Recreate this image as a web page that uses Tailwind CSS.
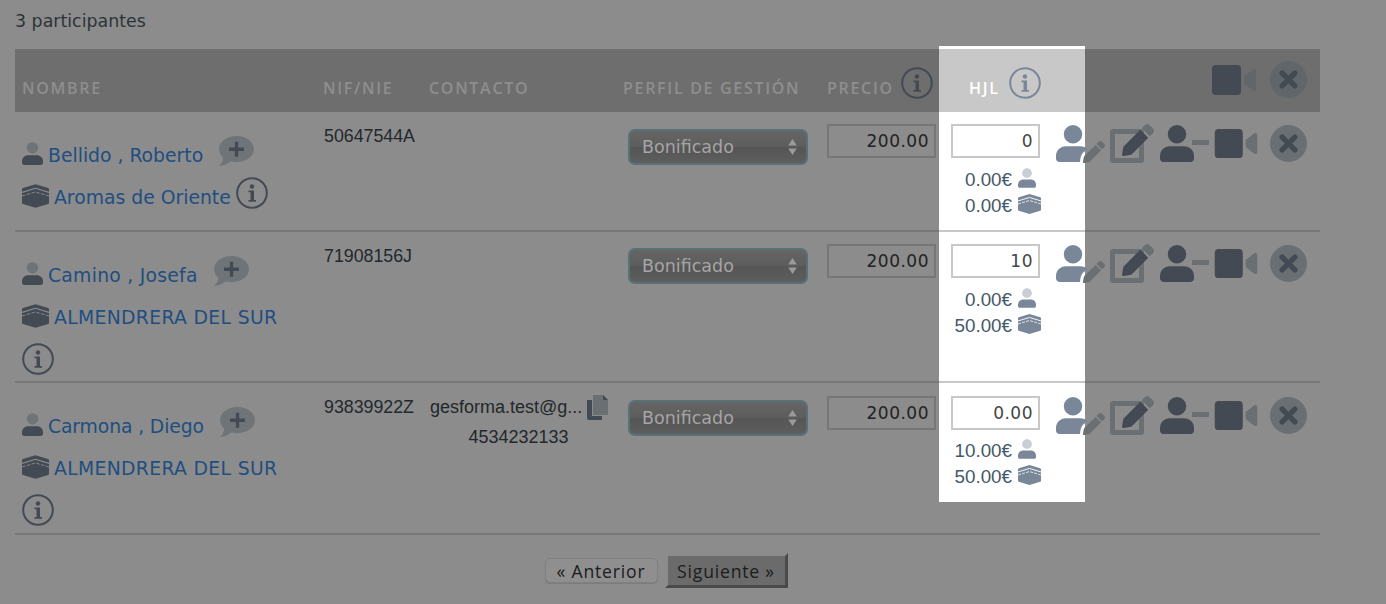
<!DOCTYPE html>
<html>

<head>
    <title>Participantes</title>
    <script src="https://cdn.jsdelivr.net/npm/@tailwindcss/browser@4"></script>
</head>

<body class="bg-[#8c8c8c] h-[604px] overflow-hidden font-['DejaVu_Sans',sans-serif]">
    <!-- shared duotone icons -->
    <svg class="hidden">
        <symbol id="user" viewBox="0 0 24 26">
            <circle cx="12" cy="6.5" r="6.5" fill="var(--soft)"></circle>
            <path fill="currentColor" d="M2.5 26C1 26 0 25 0 23.5V22c0-4 3-7 7-7h10c4 0 7 3 7 7v1.5c0 1.5-1 2.5-2.5 2.5z"></path>
        </symbol>
        <symbol id="user-cut" viewBox="0 0 24 26">
            <circle cx="12" cy="6.5" r="6.5" fill="currentColor"></circle>
            <path fill="currentColor" d="M2.5 26C1 26 0 25 0 23.5V22c0-4 3-7 7-7h10c2 0 4 .6 5.5 1.8L19 19.500c-1.300 1.500-2 4-2 6.500z"></path>
        </symbol>
        <symbol id="kaaba" viewBox="0 0 30 26">
            <path fill="currentColor" d="M15 0l14 4.200c.7.200 1 .7 1 1.300v15c0 .6-.3 1.100-1 1.300L15 26 1 21.800c-.7-.2-1-.7-1-1.300v-15c0-.6.3-1.100 1-1.300z"></path>
            <path fill="none" stroke="var(--line)" stroke-width="1.200" d="M0 9l15-4.500L30 9"></path>
            <path fill="none" stroke="var(--line)" stroke-width="1" stroke-dasharray="4 1.500" d="M0 13l15-4.500L30 13"></path>
        </symbol>
        <symbol id="info" viewBox="0 0 32 32">
            <circle cx="16" cy="16" r="14.800" fill="none" stroke="currentColor" stroke-width="2"></circle>
            <circle cx="16" cy="9.500" r="2.200" fill="currentColor"></circle>
            <path fill="currentColor" d="M12.500 13.500h5.500v9.500h2v1.700h-7.500V23h2v-7.800h-2z"></path>
        </symbol>
        <symbol id="comment" viewBox="0 0 36 31">
            <path fill="var(--soft)" d="M18 0c10 0 18 5.800 18 13.500S28 27 18 27c-2.200 0-4.300-.3-6.200-.8C9 28.800 5 31 0 31c2.500-2 4-5 4.300-8.500C1.600 20 0 17 0 13.500 0 5.800 8 0 18 0z"></path>
            <path fill="currentColor" d="M16.300 6h3.400v6h6v3.400h-6v6h-3.400v-6h-6V12h6z"></path>
        </symbol>
        <symbol id="pencil" viewBox="0 0 512 512">
            <path fill="var(--soft)" d="M497.900 142.100l-46.100 46.100c-4.700 4.700-12.300 4.700-17 0l-111-111c-4.700-4.700-4.700-12.300 0-17l46.100-46.100c18.700-18.700 49.100-18.700 67.900 0l60.100 60.100c18.800 18.700 18.800 49.100 0 67.900z"></path>
            <path fill="currentColor" d="M284.200 99.800L21.600 362.400.4 483.900c-2.900 16.400 11.400 30.600 27.800 27.800l121.500-21.300 262.600-262.600c4.700-4.700 4.700-12.300 0-17l-111-111c-4.800-4.700-12.400-4.700-17.100 0z"></path>
        </symbol>
        <symbol id="video" viewBox="0 0 44 30">
            <rect width="29" height="30" rx="4" fill="currentColor"></rect>
            <path fill="var(--soft)" d="M32 11.500L41 4.500c1.300-1 3-.2 3 1.500v18c0 1.700-1.700 2.500-3 1.500l-9-7z"></path>
        </symbol>
        <symbol id="close" viewBox="0 0 38 38">
            <circle cx="19" cy="19" r="19" fill="var(--soft)"></circle>
            <path fill="none" stroke="currentColor" stroke-width="5.500" stroke-linecap="round" d="M12.500 12.500l13 13M25.500 12.500l-13 13"></path>
        </symbol>
    </svg>

    <p class="pl-[15px] pt-[11px] h-[49px] text-[17.4px] leading-[20px] text-[#2d3439]">3 participantes</p>

    <div class="w-[1305px] ml-[15px]">
        <!-- header -->
        <div class="grid grid-cols-[301px_106px_194px_204px_119px_146px_235px] h-[63px] bg-[#6e6e6e] font-['Open_Sans',sans-serif] text-[16px] leading-[20px] font-semibold tracking-[1.7px] text-[#8e8e8e]">
            <div class="pl-[7px] pt-[29px]">NOMBRE</div>
            <div class="pl-[7px] pt-[29px]">NIF/NIE</div>
            <div class="pl-[7px] pt-[29px]">CONTACTO</div>
            <div class="pl-[7px] pt-[29px]">PERFIL DE GESTIÓN</div>
            <div class="pl-[7px] pt-[29px] flex items-start gap-[7px]">
                PRECIO
                <svg class="w-[32px] h-[32px] -mt-[11px] text-[#434a54]"><use href="#info"></use></svg>
            </div>
            <div class="-mt-[3px] h-[66px] bg-[#c8c8c8] border-t-[3px] border-white pl-[30px] pt-[29px] flex items-start gap-[9px] text-white">
                HJL
                <svg class="w-[32px] h-[32px] -mt-[11px] text-[#7a8799]"><use href="#info"></use></svg>
            </div>
            <div class="flex items-start justify-end gap-[14px] pt-[12px] pr-[13px] [--soft:#61666a]">
                <svg class="w-[44px] h-[30px] mt-[4px] text-[#434a54]"><use href="#video"></use></svg>
                <svg class="w-[37px] h-[37px] text-[#434a54]"><use href="#close"></use></svg>
            </div>
        </div>

        <!-- row 1 -->
        <div class="grid grid-cols-[301px_106px_194px_204px_119px_146px_235px] h-[120px] border-b-2 border-[#787878]">
            <div class="pl-[7px] pt-[24px] text-[18.8px] text-[#1f4e80]">
                <div class="flex items-start h-[42px]">
                    <svg class="w-[21px] h-[23px] mt-[6px] mr-[5px] text-[#434a54] [--soft:#6f7478]"><use href="#user"></use></svg>
                    <a href="#" class="leading-[30px] mt-[5px]">Bellido , Roberto</a>
                    <svg class="w-[35px] h-[30px] ml-[16px] text-[#434a54] [--soft:#6f7478]"><use href="#comment"></use></svg>
                </div>
                <div class="flex items-start">
                    <svg class="w-[27px] h-[24px] mt-[6px] mr-[5px] text-[#434a54] [--line:#8c8c8c]"><use href="#kaaba"></use></svg>
                    <a href="#" class="leading-[30px] mt-[5px]">Aromas de Oriente</a>
                    <svg class="w-[32px] h-[32px] ml-[5px] -mt-[1px] text-[#434a54]"><use href="#info"></use></svg>
                </div>
            </div>
            <div class="pl-[8px] pt-[11px] font-['Liberation_Sans',sans-serif] text-[17.8px] leading-[27px] text-[#23282c]">50647544A</div>
            <div></div>
            <div class="pl-[12px] pt-[17px]">
                <div class="relative w-[180px] h-[36px] rounded-[7px] border-2 border-[#587078] bg-[linear-gradient(#656565,#5d5d5d_48%,#555555_52%,#5e5e5e)] pl-[12px] text-[17.5px] leading-[32px] text-[#a5a5a5]">
                    Bonificado
                    <svg class="absolute right-[9px] top-[8px] w-[9px] h-[16px]" viewBox="0 0 9 17"><path fill="#9a9a9a" d="M4.500 0L9 7H0zM0 10h9l-4.500 7z"></path></svg>
                </div>
            </div>
            <div class="pl-[7px] pt-[12px]">
                <input value="200.00" class="w-[109px] h-[34px] border-2 border-[#777777] pr-[5px] text-right text-[17px] tracking-[0.5px] text-[#222222]">
            </div>
            <div class="-mb-[2px] border-b-2 border-[#c8c8c8] bg-white pl-[12px] pt-[12px]">
                <input value="0" class="w-[89px] h-[34px] border-2 border-[#c8c8c8] pr-[5px] text-right text-[17px] tracking-[0.5px] text-[#444444]">
                <div class="mt-[10px] font-['Liberation_Sans',sans-serif] text-[18.8px] text-[#44596a]">
                    <div class="flex items-center h-[25px]"><span class="w-[61px] text-right">0.00€</span><svg class="w-[18px] h-[20px] -mt-[6px] ml-[6px] text-[#7a8799] [--soft:#c9ced6]"><use href="#user"></use></svg></div>
                    <div class="flex items-center h-[27px]"><span class="w-[61px] text-right">0.00€</span><svg class="w-[23px] h-[20px] -mt-[6px] ml-[6px] text-[#7a8799] [--line:#ffffff]"><use href="#kaaba"></use></svg></div>
                </div>
            </div>
            <div class="-ml-[29px] pt-[12px] flex items-start">
                <div class="relative w-[49px] h-[39px] text-[#7a8799]">
                    <svg class="w-[34px] h-[39px]"><use href="#user-cut"></use></svg>
                    <svg class="absolute left-[27px] top-[17px] w-[22px] h-[22px] text-[#6a6f73] [--soft:#6a6f73]"><use href="#pencil"></use></svg>
                </div>
                <div class="relative w-[44px] h-[39px] ml-[5px] text-[#434a54] [--soft:#6a6f73]">
                    <div class="absolute left-0 top-[5px] w-[34px] h-[34px] rounded-[3px] border-[5px] border-[#6a6f73]"></div>
                    <svg class="absolute left-[12px] top-0 w-[32px] h-[32px]"><use href="#pencil"></use></svg>
                </div>
                <div class="relative w-[49px] h-[39px] ml-[6px] text-[#434a54] [--soft:#434a54]">
                    <svg class="w-[34px] h-[39px]"><use href="#user"></use></svg>
                    <div class="absolute left-[32px] top-[16px] w-[17px] h-[5px] bg-[#6a6f73]"></div>
                </div>
                <svg class="w-[44px] h-[29px] ml-[5px] mt-[5px] text-[#434a54] [--soft:#6a6f73]"><use href="#video"></use></svg>
                <svg class="w-[37px] h-[37px] ml-[12px] mt-[1px] text-[#434a54] [--soft:#6a6f73]"><use href="#close"></use></svg>
            </div>
        </div>

        <!-- row 2 -->
        <div class="grid grid-cols-[301px_106px_194px_204px_119px_146px_235px] h-[151px] border-b-2 border-[#787878]">
            <div class="pl-[7px] pt-[24px] text-[18.8px] text-[#1f4e80]">
                <div class="flex items-start h-[42px]">
                    <svg class="w-[21px] h-[23px] mt-[6px] mr-[5px] text-[#434a54] [--soft:#6f7478]"><use href="#user"></use></svg>
                    <a href="#" class="leading-[30px] mt-[5px] tracking-[0.25px]">Camino , Josefa</a>
                    <svg class="w-[35px] h-[30px] ml-[16px] text-[#434a54] [--soft:#6f7478]"><use href="#comment"></use></svg>
                </div>
                <div class="flex items-start">
                    <svg class="w-[27px] h-[24px] mt-[6px] mr-[5px] text-[#434a54] [--line:#8c8c8c]"><use href="#kaaba"></use></svg>
                    <a href="#" class="leading-[30px] mt-[5px] tracking-[0.33px]">ALMENDRERA DEL SUR</a>
                </div>
                <svg class="w-[32px] h-[32px] mt-[10px] text-[#434a54]"><use href="#info"></use></svg>
            </div>
            <div class="pl-[8px] pt-[11px] font-['Liberation_Sans',sans-serif] text-[17.8px] leading-[27px] text-[#23282c]">71908156J</div>
            <div></div>
            <div class="pl-[12px] pt-[16px]">
                <div class="relative w-[180px] h-[36px] rounded-[7px] border-2 border-[#587078] bg-[linear-gradient(#656565,#5d5d5d_48%,#555555_52%,#5e5e5e)] pl-[12px] text-[17.5px] leading-[32px] text-[#a5a5a5]">
                    Bonificado
                    <svg class="absolute right-[9px] top-[8px] w-[9px] h-[16px]" viewBox="0 0 9 17"><path fill="#9a9a9a" d="M4.500 0L9 7H0zM0 10h9l-4.500 7z"></path></svg>
                </div>
            </div>
            <div class="pl-[7px] pt-[12px]">
                <input value="200.00" class="w-[109px] h-[34px] border-2 border-[#777777] pr-[5px] text-right text-[17px] tracking-[0.5px] text-[#222222]">
            </div>
            <div class="-mb-[2px] border-b-2 border-[#c8c8c8] bg-white pl-[12px] pt-[12px]">
                <input value="10" class="w-[89px] h-[34px] border-2 border-[#c8c8c8] pr-[5px] text-right text-[17px] tracking-[0.5px] text-[#444444]">
                <div class="mt-[10px] font-['Liberation_Sans',sans-serif] text-[18.8px] text-[#44596a]">
                    <div class="flex items-center h-[25px]"><span class="w-[61px] text-right">0.00€</span><svg class="w-[18px] h-[20px] -mt-[6px] ml-[6px] text-[#7a8799] [--soft:#c9ced6]"><use href="#user"></use></svg></div>
                    <div class="flex items-center h-[27px]"><span class="w-[61px] text-right">50.00€</span><svg class="w-[23px] h-[20px] -mt-[6px] ml-[6px] text-[#7a8799] [--line:#ffffff]"><use href="#kaaba"></use></svg></div>
                </div>
            </div>
            <div class="-ml-[29px] pt-[12px] flex items-start">
                <div class="relative w-[49px] h-[39px] text-[#7a8799]">
                    <svg class="w-[34px] h-[39px]"><use href="#user-cut"></use></svg>
                    <svg class="absolute left-[27px] top-[17px] w-[22px] h-[22px] text-[#6a6f73] [--soft:#6a6f73]"><use href="#pencil"></use></svg>
                </div>
                <div class="relative w-[44px] h-[39px] ml-[5px] text-[#434a54] [--soft:#6a6f73]">
                    <div class="absolute left-0 top-[5px] w-[34px] h-[34px] rounded-[3px] border-[5px] border-[#6a6f73]"></div>
                    <svg class="absolute left-[12px] top-0 w-[32px] h-[32px]"><use href="#pencil"></use></svg>
                </div>
                <div class="relative w-[49px] h-[39px] ml-[6px] text-[#434a54] [--soft:#434a54]">
                    <svg class="w-[34px] h-[39px]"><use href="#user"></use></svg>
                    <div class="absolute left-[32px] top-[16px] w-[17px] h-[5px] bg-[#6a6f73]"></div>
                </div>
                <svg class="w-[44px] h-[29px] ml-[5px] mt-[5px] text-[#434a54] [--soft:#6a6f73]"><use href="#video"></use></svg>
                <svg class="w-[37px] h-[37px] ml-[12px] mt-[1px] text-[#434a54] [--soft:#6a6f73]"><use href="#close"></use></svg>
            </div>
        </div>

        <!-- row 3 -->
        <div class="grid grid-cols-[301px_106px_194px_204px_119px_146px_235px] h-[152px] border-b-2 border-[#787878]">
            <div class="pl-[7px] pt-[24px] text-[18.8px] text-[#1f4e80]">
                <div class="flex items-start h-[42px]">
                    <svg class="w-[21px] h-[23px] mt-[6px] mr-[5px] text-[#434a54] [--soft:#6f7478]"><use href="#user"></use></svg>
                    <a href="#" class="leading-[30px] mt-[5px] tracking-[-0.13px]">Carmona , Diego</a>
                    <svg class="w-[35px] h-[30px] ml-[16px] text-[#434a54] [--soft:#6f7478]"><use href="#comment"></use></svg>
                </div>
                <div class="flex items-start">
                    <svg class="w-[27px] h-[24px] mt-[6px] mr-[5px] text-[#434a54] [--line:#8c8c8c]"><use href="#kaaba"></use></svg>
                    <a href="#" class="leading-[30px] mt-[5px] tracking-[0.33px]">ALMENDRERA DEL SUR</a>
                </div>
                <svg class="w-[32px] h-[32px] mt-[10px] text-[#434a54]"><use href="#info"></use></svg>
            </div>
            <div class="pl-[8px] pt-[11px] font-['Liberation_Sans',sans-serif] text-[17.8px] leading-[27px] text-[#23282c]">93839922Z</div>
            <div class="pl-[8px] pt-[11px] font-['Liberation_Sans',sans-serif] text-[18px] leading-[27px] text-[#23282c]">
                <div class="flex items-start gap-[5px] h-[30px] whitespace-nowrap">
                    gesforma.test@g...
                    <svg class="w-[22px] h-[25px] mt-[1px]" viewBox="0 0 22 25"><path fill="#434a54" d="M0 5h5v16h10v4H2c-1 0-2-1-2-2z"></path><path fill="#6a6f73" d="M6 0h10l5 5v15H6z"></path><path fill="#434a54" d="M16 0l5 5h-5z"></path></svg>
                </div>
                <div class="w-[177px] text-center">4534232133</div>
            </div>
            <div class="pl-[12px] pt-[17px]">
                <div class="relative w-[180px] h-[36px] rounded-[7px] border-2 border-[#587078] bg-[linear-gradient(#656565,#5d5d5d_48%,#555555_52%,#5e5e5e)] pl-[12px] text-[17.5px] leading-[32px] text-[#a5a5a5]">
                    Bonificado
                    <svg class="absolute right-[9px] top-[8px] w-[9px] h-[16px]" viewBox="0 0 9 17"><path fill="#9a9a9a" d="M4.500 0L9 7H0zM0 10h9l-4.500 7z"></path></svg>
                </div>
            </div>
            <div class="pl-[7px] pt-[13px]">
                <input value="200.00" class="w-[109px] h-[34px] border-2 border-[#777777] pr-[5px] text-right text-[17px] tracking-[0.5px] text-[#222222]">
            </div>
            <div class="self-start h-[119px] bg-white pl-[12px] pt-[13px]">
                <input value="0.00" class="w-[89px] h-[34px] border-2 border-[#c8c8c8] pr-[5px] text-right text-[17px] tracking-[0.5px] text-[#444444]">
                <div class="mt-[9px] font-['Liberation_Sans',sans-serif] text-[18.8px] text-[#44596a]">
                    <div class="flex items-center h-[25px]"><span class="w-[61px] text-right">10.00€</span><svg class="w-[18px] h-[20px] -mt-[6px] ml-[6px] text-[#7a8799] [--soft:#c9ced6]"><use href="#user"></use></svg></div>
                    <div class="flex items-center h-[27px]"><span class="w-[61px] text-right">50.00€</span><svg class="w-[23px] h-[20px] -mt-[6px] ml-[6px] text-[#7a8799] [--line:#ffffff]"><use href="#kaaba"></use></svg></div>
                </div>
            </div>
            <div class="-ml-[29px] pt-[13px] flex items-start">
                <div class="relative w-[49px] h-[39px] text-[#7a8799]">
                    <svg class="w-[34px] h-[39px]"><use href="#user-cut"></use></svg>
                    <svg class="absolute left-[27px] top-[17px] w-[22px] h-[22px] text-[#6a6f73] [--soft:#6a6f73]"><use href="#pencil"></use></svg>
                </div>
                <div class="relative w-[44px] h-[39px] ml-[5px] text-[#434a54] [--soft:#6a6f73]">
                    <div class="absolute left-0 top-[5px] w-[34px] h-[34px] rounded-[3px] border-[5px] border-[#6a6f73]"></div>
                    <svg class="absolute left-[12px] top-0 w-[32px] h-[32px]"><use href="#pencil"></use></svg>
                </div>
                <div class="relative w-[49px] h-[39px] ml-[6px] text-[#434a54] [--soft:#434a54]">
                    <svg class="w-[34px] h-[39px]"><use href="#user"></use></svg>
                    <div class="absolute left-[32px] top-[16px] w-[17px] h-[5px] bg-[#6a6f73]"></div>
                </div>
                <svg class="w-[44px] h-[29px] ml-[5px] mt-[5px] text-[#434a54] [--soft:#6a6f73]"><use href="#video"></use></svg>
                <svg class="w-[37px] h-[37px] ml-[12px] mt-[1px] text-[#434a54] [--soft:#6a6f73]"><use href="#close"></use></svg>
            </div>
        </div>

        <!-- pager -->
        <div class="flex items-center justify-center gap-[7px] pt-[18px] pr-[3px] font-['Open_Sans',sans-serif] text-[17.6px] tracking-[0.8px] text-[#1c1c1c]">
            <button class="w-[113px] h-[25px] rounded-[5px] border border-[#808080] bg-[#8f8f8f] leading-[22px] shadow-[0_1px_1px_#7a7a7a]">« Anterior</button>
            <button class="w-[123px] h-[35px] bg-[#6b6b6b] bg-clip-padding border-[3px] border-l-transparent border-t-transparent border-r-[#4a4a4a] border-b-[#4a4a4a] leading-[26px]">Siguiente »</button>
        </div>
    </div>
</body>

</html>
